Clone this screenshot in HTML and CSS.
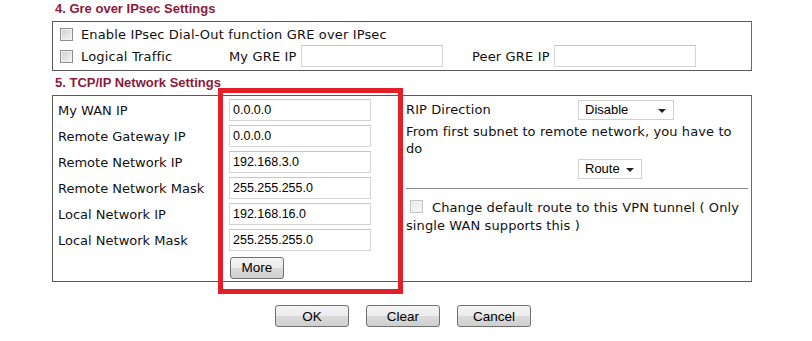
FILE: index.html
```html
<!DOCTYPE html>
<html lang="en">
<head>
  <meta charset="UTF-8">
  <title>IPsec Dial-Out Profile</title>
  <link rel="stylesheet" href="styles.css">
</head>
<body>
  <div class="page">
    <!-- Section 4 -->
    <div class="section-title">4. Gre over IPsec Settings</div>
    <div class="panel gre">
      <div class="gre-row">
        <span class="check"></span>
        <span>Enable IPsec Dial-Out function GRE over IPsec</span>
      </div>
      <div class="gre-row">
        <span class="check"></span>
        <span class="gre-name">Logical Traffic</span>
        <span class="gre-label">My GRE IP</span>
        <span class="field"></span>
        <span class="gre-label peer">Peer GRE IP</span>
        <span class="field"></span>
      </div>
    </div>

    <!-- Section 5 -->
    <div class="section-title">5. TCP/IP Network Settings</div>
    <div class="panel tcp">
      <div class="tcp-left">
        <span>My WAN IP</span><span class="field">0.0.0.0</span>
        <span>Remote Gateway IP</span><span class="field">0.0.0.0</span>
        <span>Remote Network IP</span><span class="field">192.168.3.0</span>
        <span>Remote Network Mask</span><span class="field">255.255.255.0</span>
        <span>Local Network IP</span><span class="field">192.168.16.0</span>
        <span>Local Network Mask</span><span class="field">255.255.255.0</span>
        <span></span><span><span class="btn more">More</span></span>
      </div>
      <div class="tcp-right">
        <div class="rip-row">
          <span class="rip-label">RIP Direction</span>
          <span class="select wide">Disable</span>
        </div>
        <p class="subnet-note">From first subnet to remote network, you have to do</p>
        <div class="route-row">
          <span class="select">Route</span>
        </div>
        <hr class="divider">
        <p class="default-route"><span class="check disabled"></span>Change default route to this VPN tunnel ( Only single WAN supports this )</p>
      </div>
    </div>

    <div class="actions">
      <span class="btn action">OK</span>
      <span class="btn action">Clear</span>
      <span class="btn action">Cancel</span>
    </div>
  </div>

  <!-- annotation -->
  <div class="highlight"></div>
</body>
</html>
```

FILE: styles.css
```css
/* Base page */
body {
  margin: 0;
  background: #fff;
  color: #111;
  font-family: "DejaVu Sans", Verdana, sans-serif;
  font-size: 13px;
}

.page {
  width: 700px;
  margin-left: 52px;
}

/* Section titles */
.section-title {
  font-family: "Liberation Sans", Arial, sans-serif;
  font-weight: bold;
  font-size: 13px;
  line-height: 18px;
  color: #8a1a3c;
  padding-left: 3px;
  margin-bottom: 3px;
}
.panel + .section-title {
  margin-top: 3px;
}

/* Bordered panels */
.panel {
  border: 1px solid #5a5a5a;
  border-right-color: #6a6a6a;
  box-sizing: border-box;
}

/* Gre over IPsec */
.gre {
  padding: 1px 5px 3px;
  letter-spacing: 0.15px;
}
.gre-row {
  display: flex;
  align-items: center;
  height: 22px;
}
.gre-name {
  width: 148px;
}
.gre-label {
  width: 72px;
}
.gre-label.peer {
  margin-left: 29px;
  width: 82px;
}

/* Checkbox look */
.check {
  display: inline-block;
  width: 11px;
  height: 11px;
  margin: 0 8px 0 2px;
  border: 1px solid #8e8e8e;
  background: linear-gradient(135deg, #cfcfcf, #f4f4f4);
  box-shadow: inset 0 0 0 1px #f2f2f2;
  flex-shrink: 0;
}
.check.disabled {
  border-color: #c4c4c4;
  background: linear-gradient(135deg, #e8e8e8, #fafafa);
  vertical-align: -1px;
  margin: 0 9px 0 4px;
}

/* Text fields */
.field {
  display: inline-flex;
  align-items: center;
  box-sizing: border-box;
  width: 142px;
  height: 22px;
  padding-left: 3px;
  border: 1px solid #d4d4d4;
  border-top-color: #c6c6c6;
  font-family: "Liberation Sans", Arial, sans-serif;
  font-size: 12.5px;
  letter-spacing: 0;
  color: #000;
}

/* TCP/IP settings */
.tcp {
  display: flex;
  padding-bottom: 2px;
}
.tcp-left {
  display: grid;
  grid-template-columns: 171px 172px;
  grid-auto-rows: 26px;
  align-items: center;
  padding: 1px 0 0 5px;
  border-right: 1px solid #6a6a6a;
}
.tcp-right {
  flex: 1;
  padding: 0 3px 0 4px;
  letter-spacing: 0.1px;
}

.rip-row {
  display: flex;
  align-items: center;
  height: 27px;
}
.rip-label {
  width: 172px;
}

/* Dropdowns */
.select {
  position: relative;
  display: inline-flex;
  align-items: center;
  box-sizing: border-box;
  height: 20px;
  width: 64px;
  padding-left: 6px;
  border: 1px solid #d0d0d0;
  font-family: "Liberation Sans", Arial, sans-serif;
  font-size: 13px;
  letter-spacing: 0;
  color: #000;
}
.select.wide {
  width: 96px;
}
.select::after {
  content: "";
  position: absolute;
  right: 7px;
  top: 8px;
  border-left: 4px solid transparent;
  border-right: 4px solid transparent;
  border-top: 4px solid #222;
}

.subnet-note {
  margin: 0;
  line-height: 17px;
}
.route-row {
  display: flex;
  align-items: center;
  height: 23px;
  padding-left: 172px;
}
.divider {
  margin: 8px 0 0;
  border: 0;
  border-top: 1px solid #8a8a8a;
}
.default-route {
  margin: 10px 0 0;
  line-height: 18px;
}

/* Buttons */
.btn {
  display: inline-flex;
  align-items: center;
  justify-content: center;
  box-sizing: border-box;
  height: 22px;
  border: 1px solid #707070;
  border-radius: 3px;
  background: linear-gradient(#f4f4f4 0%, #ebebeb 50%, #dadada 51%, #cfcfcf 100%);
  font-family: "Liberation Sans", Arial, sans-serif;
  font-size: 13.5px;
  color: #000;
}
.btn.more {
  width: 54px;
  height: 22px;
  margin-left: 1px;
  margin-top: 3px;
}
.actions {
  display: flex;
  justify-content: center;
  gap: 17px;
  margin-top: 23px;
  padding-left: 2px;
}
.btn.action {
  width: 74px;
}

/* Red annotation frame */
.highlight {
  position: absolute;
  left: 218px;
  top: 88px;
  width: 185px;
  height: 206px;
  box-sizing: border-box;
  border: 5px solid #e3202a;
}
```
